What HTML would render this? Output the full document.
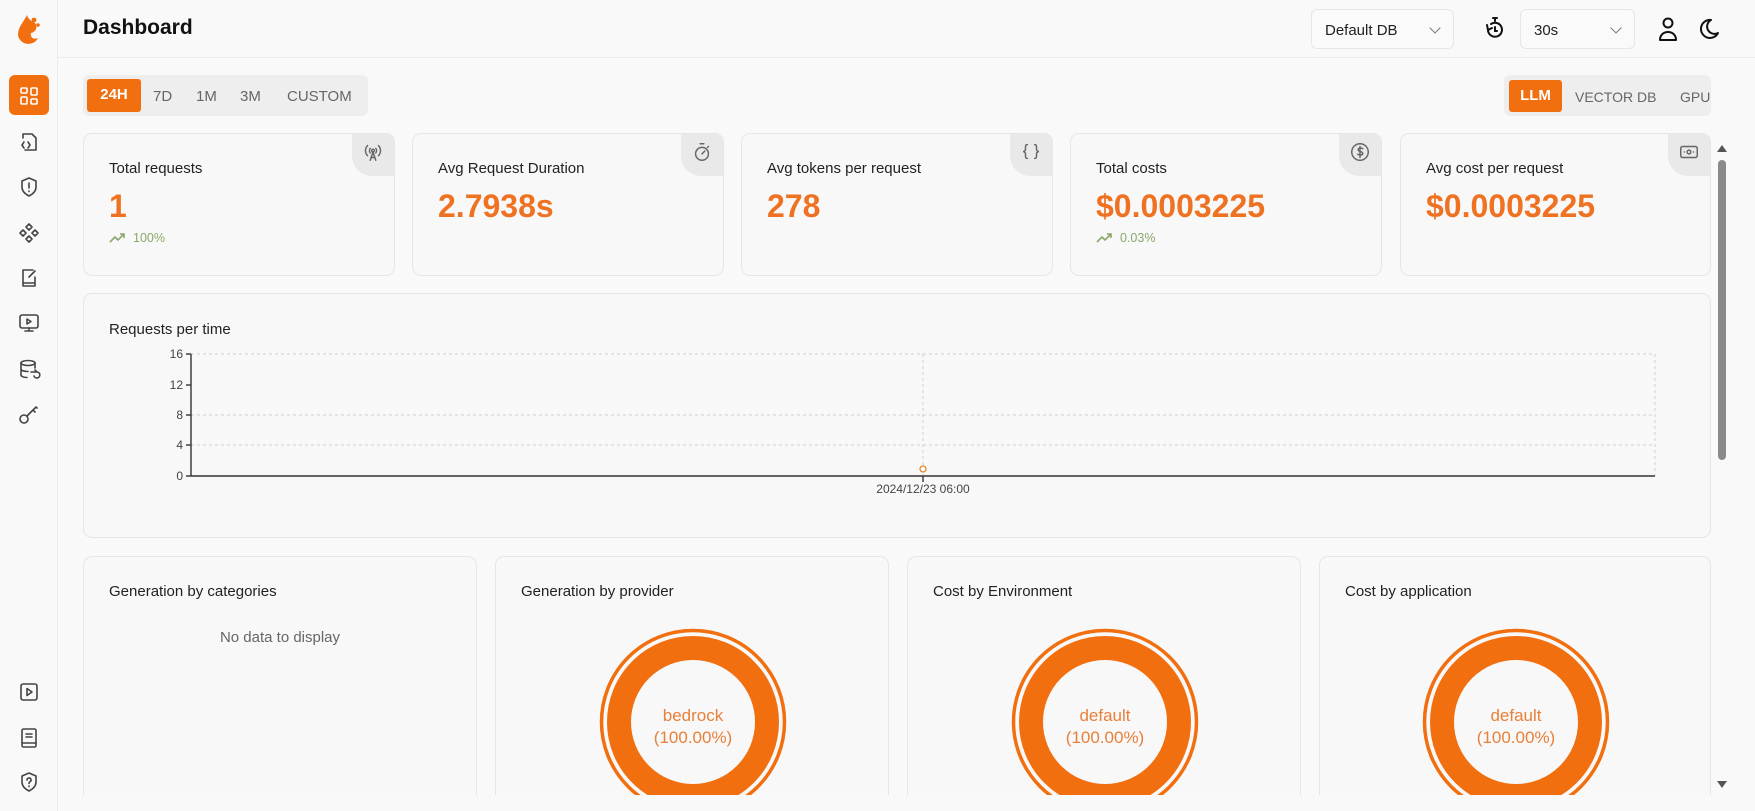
<!DOCTYPE html>
<html><head><meta charset="utf-8">
<style>
*{box-sizing:border-box;margin:0;padding:0}
html{overflow:hidden}
body{width:1755px;height:811px;overflow:hidden;background:#f9f9f9;font-family:"Liberation Sans",sans-serif;color:#222;position:relative}
.abs{position:absolute}
.side{left:0;top:0;width:58px;height:811px;border-right:1px solid #ececec}
.hdr{left:58px;top:0;width:1697px;height:58px;border-bottom:1px solid #ececec}
.ic{position:absolute;left:17px;width:24px;height:24px}
.ic svg{width:24px;height:24px;fill:none;stroke:#444;stroke-width:1.6;stroke-linecap:round;stroke-linejoin:round}
.sel{border:1px solid #e6e6e6;border-radius:6px;background:#fafafa;font-size:15px;padding:12px 13px;color:#222}
.sel .ch{position:absolute;right:14px;top:14px;width:8px;height:8px;border-right:1.4px solid #777;border-bottom:1.4px solid #777;transform:rotate(45deg)}
.grp{background:#eeeeee;border-radius:6px;font-size:15px;color:#666}
.grp span{position:absolute;top:13px}
.act{position:absolute;background:#f26f0f;color:#fff;border-radius:3px;font-weight:bold;text-align:center;line-height:32px}
.card{border:1px solid #e6e6e6;border-radius:9px;background:#f8f8f8;overflow:hidden}
.card .t{position:absolute;left:25px;top:26px;font-size:15px;color:#222}
.card .v{position:absolute;left:25px;top:54px;font-size:32px;font-weight:bold;color:#ee7221}
.card .tr{position:absolute;left:25px;top:97px;font-size:12.5px;color:#8aa86a}
.tr svg{vertical-align:-2px;margin-right:8px}
.blob{position:absolute;right:0;top:0;width:42px;height:42px;background:#e9e9e9;border-bottom-left-radius:20px}
.blob svg{position:absolute;left:10px;top:7px;width:22px;height:22px;fill:none;stroke:#666;stroke-width:1.6;stroke-linecap:round;stroke-linejoin:round}
.bc .t{position:absolute;left:25px;top:26px;font-size:15px}
</style></head><body>
<div class="abs side">
  <svg class="abs" style="left:16px;top:13px" width="26" height="34" viewBox="0 0 26 34"><path d="M11 2 C7 10 2 14 2 22 a10.5 10 0 0 0 20 3 c-5 2 -8 -1 -7 -5 c5 -1 7 -6 4 -10 c-4 -2 -7 -4 -8 -8z" fill="#f26f0f"/><circle cx="18" cy="7" r="2.4" fill="#f26f0f"/><circle cx="22" cy="12" r="1.8" fill="#f26f0f"/></svg>
  <div class="abs" style="left:9px;top:75px;width:40px;height:40px;background:#f26f0f;border-radius:6px"></div>
  <div class="ic" style="top:84px"><svg viewBox="0 0 24 24" style="stroke:#fff"><rect x="4" y="4" width="6" height="5" rx="1"/><rect x="14" y="4" width="6" height="7" rx="1"/><rect x="4" y="13" width="6" height="7" rx="1"/><rect x="14" y="15" width="6" height="5" rx="1"/></svg></div>
  <div class="ic" style="top:130px"><svg viewBox="0 0 24 24"><path d="M6 8V4h9l4 4v12H8"/><path d="M7 12l-2 3 2 3M11 12l2 3-2 3"/></svg></div>
  <div class="ic" style="top:175px"><svg viewBox="0 0 24 24"><path d="M12 3l7 3v6c0 4-3 7-7 9-4-2-7-5-7-9V6z"/><path d="M12 8v5M12 16v.5"/></svg></div>
  <div class="ic" style="top:221px"><svg viewBox="0 0 24 24"><path d="M12 3l3 3-3 3-3-3zM6 9l3 3-3 3-3-3zM18 9l3 3-3 3-3-3zM12 15l3 3-3 3-3-3z"/></svg></div>
  <div class="ic" style="top:266px"><svg viewBox="0 0 24 24"><path d="M16 4H6v16h12v-9M6 17h12"/><path d="M12 11l6-6"/></svg></div>
  <div class="ic" style="top:311px"><svg viewBox="0 0 24 24"><rect x="3" y="4" width="18" height="13" rx="2"/><path d="M10 8l4 2.5-4 2.5zM12 17v3M8 20h8"/></svg></div>
  <div class="ic" style="top:357px"><svg viewBox="0 0 24 24"><ellipse cx="11" cy="6" rx="7" ry="2.5"/><path d="M4 6v12c0 1.5 3 2.5 6 2.5M18 6v5M4 12c0 1.5 3 2.5 7 2.5"/><path d="M14 15h6l-2 -2M20 15a3 3 0 1 1-3 4"/></svg></div>
  <div class="ic" style="top:403px"><svg viewBox="0 0 24 24"><circle cx="7" cy="16" r="4"/><path d="M10 13l9-9M16 7l2 2M19 4l1 1"/></svg></div>
  <div class="ic" style="top:680px"><svg viewBox="0 0 24 24"><rect x="4" y="4" width="16" height="16" rx="2"/><path d="M10 8.5l5 3.5-5 3.5z"/></svg></div>
  <div class="ic" style="top:726px"><svg viewBox="0 0 24 24"><rect x="5" y="3" width="14" height="18" rx="1.5"/><path d="M9 8h6M9 11h6M5 17h14"/></svg></div>
  <div class="ic" style="top:770px"><svg viewBox="0 0 24 24"><path d="M12 3l7 3v6c0 4-3 7-7 9-4-2-7-5-7-9V6z"/><path d="M10 10a2 2 0 1 1 3 1.7c-.7.4-1 .8-1 1.8M12 16v.5"/></svg></div>
</div>
<div class="abs hdr">
  <div class="abs" style="left:25px;top:16px;font-size:21px;font-weight:bold;color:#111">Dashboard</div>
</div>
<div class="abs sel" style="left:1311px;top:9px;width:143px;height:40px">Default DB<div class="ch"></div></div>
<svg class="abs" style="left:1483px;top:16px" width="24" height="26" viewBox="0 0 24 26" fill="none" stroke="#111" stroke-width="2" stroke-linecap="round"><path d="M10 2h4M12 2v3"/><path d="M5 14a7 7 0 1 0 3-6"/><path d="M4 9l1 5 4-2"/><path d="M12 11v4h2"/></svg>
<div class="abs sel" style="left:1520px;top:9px;width:115px;height:40px">30s<div class="ch"></div></div>
<svg class="abs" style="left:1656px;top:16px" width="24" height="26" viewBox="0 0 24 26" fill="none" stroke="#111" stroke-width="2"><circle cx="12" cy="7" r="4.5"/><path d="M4 24c0-5 3.5-8 8-8s8 3 8 8z" stroke-linejoin="round"/></svg>
<svg class="abs" style="left:1697px;top:17px" width="24" height="24" viewBox="0 0 24 24" fill="none" stroke="#111" stroke-width="2" stroke-linejoin="round"><path d="M14 3a9 9 0 1 0 7 13 7 7 0 0 1-7-13z"/></svg>

<div class="abs grp" style="left:83px;top:75px;width:285px;height:41px">
  <div class="act" style="left:4px;top:4px;width:54px;height:33px">24H</div>
  <span style="left:70px">7D</span><span style="left:113px">1M</span><span style="left:157px">3M</span><span style="left:204px">CUSTOM</span>
</div>
<div class="abs grp" style="left:1504px;top:75px;width:207px;height:41px;font-size:14px">
  <div class="act" style="left:5px;top:5px;width:53px;height:32px;font-size:15px">LLM</div>
  <span style="left:71px;top:14px">VECTOR DB</span><span style="left:176px;top:14px">GPU</span>
</div>

<div class="abs card" style="left:83px;top:133px;width:312px;height:143px"><div class="blob"><svg viewBox="0 0 24 24"><path d="M6 5a8 8 0 0 0 0 11M18 5a8 8 0 0 1 0 11M9 8a4 4 0 0 0 0 5M15 8a4 4 0 0 1 0 5"/><circle cx="12" cy="10.5" r="1.5"/><path d="M12 12l-3 9M12 12l3 9M10 18h4"/></svg></div><div class="t">Total requests</div><div class="v">1</div><div class="tr"><svg width="16" height="12" viewBox="0 0 16 12" fill="none" stroke="#8aa86a" stroke-width="1.6"><path d="M1 10l5-5 3 3 6-6M11 2h4v4"/></svg>100%</div></div>
<div class="abs card" style="left:412px;top:133px;width:312px;height:143px"><div class="blob"><svg viewBox="0 0 24 24"><circle cx="12" cy="14" r="7"/><path d="M10 3h4M12 14l3-3M18 7l1-1"/></svg></div><div class="t">Avg Request Duration</div><div class="v">2.7938s</div></div>
<div class="abs card" style="left:741px;top:133px;width:312px;height:143px"><div class="blob"><svg viewBox="0 0 24 24"><path d="M8 4c-2 0-2 1-2 3v2c0 1.5-1 2-2 2.5 1 .5 2 1 2 2.5v2c0 2 0 3 2 3M16 4c2 0 2 1 2 3v2c0 1.5 1 2 2 2.5-1 .5-2 1-2 2.5v2c0 2 0 3-2 3"/></svg></div><div class="t">Avg tokens per request</div><div class="v">278</div></div>
<div class="abs card" style="left:1070px;top:133px;width:312px;height:143px"><div class="blob"><svg viewBox="0 0 24 24"><circle cx="12" cy="12" r="9"/><path d="M15 8.5c-1-1-5-1.5-5 1s5 1.5 5 4-4 2-5.5 1M12 6v12"/></svg></div><div class="t">Total costs</div><div class="v">$0.0003225</div><div class="tr"><svg width="16" height="12" viewBox="0 0 16 12" fill="none" stroke="#8aa86a" stroke-width="1.6"><path d="M1 10l5-5 3 3 6-6M11 2h4v4"/></svg>0.03%</div></div>
<div class="abs card" style="left:1400px;top:133px;width:311px;height:143px"><div class="blob"><svg viewBox="0 0 24 24"><rect x="3" y="6" width="18" height="12" rx="2"/><circle cx="12" cy="12" r="2"/><path d="M7 12h.01M17 12h.01"/></svg></div><div class="t">Avg cost per request</div><div class="v">$0.0003225</div></div>

<div class="abs card" style="left:83px;top:293px;width:1628px;height:245px">
  <div class="t" style="top:27px">Requests per time</div>
</div>
<svg class="abs" style="left:140px;top:345px" width="1530" height="160" font-family="Liberation Sans" font-size="12" fill="#444">
  <g stroke="#cfcfcf" stroke-dasharray="3 3"><line x1="51" y1="9" x2="1515" y2="9"/><line x1="51" y1="70" x2="1515" y2="70"/><line x1="51" y1="100" x2="1515" y2="100"/><line x1="783" y1="9" x2="783" y2="131"/><line x1="1515" y1="9" x2="1515" y2="131"/></g>
  <g stroke="#333" stroke-width="1.4"><line x1="51" y1="9" x2="51" y2="131"/><line x1="51" y1="131" x2="1515" y2="131"/><line x1="46" y1="9" x2="51" y2="9"/><line x1="46" y1="40" x2="51" y2="40"/><line x1="46" y1="70" x2="51" y2="70"/><line x1="46" y1="100" x2="51" y2="100"/><line x1="46" y1="131" x2="51" y2="131"/><line x1="783" y1="131" x2="783" y2="137"/></g>
  <g text-anchor="end"><text x="43" y="13">16</text><text x="43" y="44">12</text><text x="43" y="74">8</text><text x="43" y="104">4</text><text x="43" y="135">0</text></g>
  <text x="783" y="148" text-anchor="middle">2024/12/23 06:00</text>
  <circle cx="783" cy="124" r="3" fill="#fff" stroke="#e9862f" stroke-width="1.3"/>
</svg>

<div class="abs" style="left:58px;top:540px;width:1660px;height:255px;overflow:hidden">
  <div class="abs card bc" style="left:25px;top:16px;width:394px;height:300px"><div class="t">Generation by categories</div><div class="abs" style="left:0;right:0;top:72px;text-align:center;font-size:15px;color:#666">No data to display</div></div>
  <div class="abs card bc" style="left:437px;top:16px;width:394px;height:300px"><div class="t">Generation by provider</div>
    <svg class="abs" style="left:0;top:0" width="394" height="300" font-family="Liberation Sans" font-size="17" fill="#e8803a" text-anchor="middle"><circle cx="197" cy="165" r="91.5" fill="none" stroke="#f26f0f" stroke-width="3.5"/><circle cx="197" cy="165" r="74" fill="none" stroke="#f26f0f" stroke-width="24"/><text x="197" y="164">bedrock</text><text x="197" y="186">(100.00%)</text></svg></div>
  <div class="abs card bc" style="left:849px;top:16px;width:394px;height:300px"><div class="t">Cost by Environment</div>
    <svg class="abs" style="left:0;top:0" width="394" height="300" font-family="Liberation Sans" font-size="17" fill="#e8803a" text-anchor="middle"><circle cx="197" cy="165" r="91.5" fill="none" stroke="#f26f0f" stroke-width="3.5"/><circle cx="197" cy="165" r="74" fill="none" stroke="#f26f0f" stroke-width="24"/><text x="197" y="164">default</text><text x="197" y="186">(100.00%)</text></svg></div>
  <div class="abs card bc" style="left:1261px;top:16px;width:392px;height:300px"><div class="t">Cost by application</div>
    <svg class="abs" style="left:0;top:0" width="392" height="300" font-family="Liberation Sans" font-size="17" fill="#e8803a" text-anchor="middle"><circle cx="196" cy="165" r="91.5" fill="none" stroke="#f26f0f" stroke-width="3.5"/><circle cx="196" cy="165" r="74" fill="none" stroke="#f26f0f" stroke-width="24"/><text x="196" y="164">default</text><text x="196" y="186">(100.00%)</text></svg></div>
</div>

<svg class="abs" style="left:1714px;top:140px" width="16" height="655"><path d="M3 12l5-7 5 7z" fill="#555"/><rect x="4" y="20" width="8" height="300" rx="4" fill="#8a8a8a"/><path d="M3 641l5 7 5-7z" fill="#555"/></svg>
</body></html>
